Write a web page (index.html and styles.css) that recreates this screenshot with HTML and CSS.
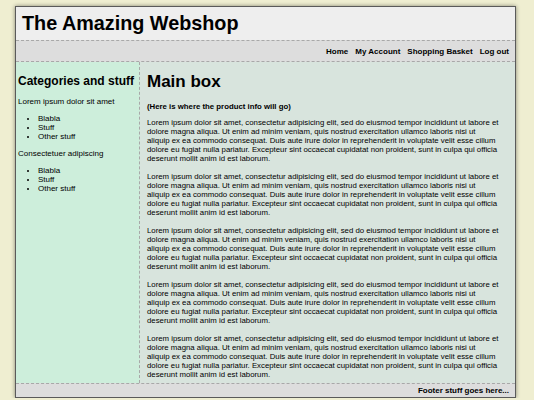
FILE: index.html
```html
<!DOCTYPE html>
<html>
<head>
<meta charset="utf-8">
<title>The Amazing Webshop</title>
<link rel="stylesheet" href="styles.css">
</head>
<body>
<div class="page">
  <header class="header">
    <h1 class="title">The Amazing Webshop</h1>
  </header>
  <nav class="nav">
    <a href="#">Home</a>
    <a href="#">My Account</a>
    <a href="#">Shopping Basket</a>
    <a href="#">Log out</a>
  </nav>
  <div class="content">
    <aside class="sidebar">
      <h2 class="side-title">Categories and stuff</h2>
      <p class="side-text">Lorem ipsum dolor sit amet</p>
      <ul class="side-list">
        <li>Blabla</li>
        <li>Stuff</li>
        <li>Other stuff</li>
      </ul>
      <p class="side-text">Consectetuer adipiscing</p>
      <ul class="side-list">
        <li>Blabla</li>
        <li>Stuff</li>
        <li>Other stuff</li>
      </ul>
    </aside>
    <main class="main">
      <h2 class="main-title">Main box</h2>
      <p class="lead">(Here is where the product info will go)</p>
      <p class="para">Lorem ipsum dolor sit amet, consectetur adipisicing elit, sed do eiusmod tempor incididunt ut labore et<br>dolore magna aliqua. Ut enim ad minim veniam, quis nostrud exercitation ullamco laboris nisi ut<br>aliquip ex ea commodo consequat. Duis aute irure dolor in reprehenderit in voluptate velit esse cillum<br>dolore eu fugiat nulla pariatur. Excepteur sint occaecat cupidatat non proident, sunt in culpa qui officia<br>deserunt mollit anim id est laborum.</p>
      <p class="para">Lorem ipsum dolor sit amet, consectetur adipisicing elit, sed do eiusmod tempor incididunt ut labore et<br>dolore magna aliqua. Ut enim ad minim veniam, quis nostrud exercitation ullamco laboris nisi ut<br>aliquip ex ea commodo consequat. Duis aute irure dolor in reprehenderit in voluptate velit esse cillum<br>dolore eu fugiat nulla pariatur. Excepteur sint occaecat cupidatat non proident, sunt in culpa qui officia<br>deserunt mollit anim id est laborum.</p>
      <p class="para">Lorem ipsum dolor sit amet, consectetur adipisicing elit, sed do eiusmod tempor incididunt ut labore et<br>dolore magna aliqua. Ut enim ad minim veniam, quis nostrud exercitation ullamco laboris nisi ut<br>aliquip ex ea commodo consequat. Duis aute irure dolor in reprehenderit in voluptate velit esse cillum<br>dolore eu fugiat nulla pariatur. Excepteur sint occaecat cupidatat non proident, sunt in culpa qui officia<br>deserunt mollit anim id est laborum.</p>
      <p class="para">Lorem ipsum dolor sit amet, consectetur adipisicing elit, sed do eiusmod tempor incididunt ut labore et<br>dolore magna aliqua. Ut enim ad minim veniam, quis nostrud exercitation ullamco laboris nisi ut<br>aliquip ex ea commodo consequat. Duis aute irure dolor in reprehenderit in voluptate velit esse cillum<br>dolore eu fugiat nulla pariatur. Excepteur sint occaecat cupidatat non proident, sunt in culpa qui officia<br>deserunt mollit anim id est laborum.</p>
      <p class="para">Lorem ipsum dolor sit amet, consectetur adipisicing elit, sed do eiusmod tempor incididunt ut labore et<br>dolore magna aliqua. Ut enim ad minim veniam, quis nostrud exercitation ullamco laboris nisi ut<br>aliquip ex ea commodo consequat. Duis aute irure dolor in reprehenderit in voluptate velit esse cillum<br>dolore eu fugiat nulla pariatur. Excepteur sint occaecat cupidatat non proident, sunt in culpa qui officia<br>deserunt mollit anim id est laborum.</p>
    </main>
  </div>
  <footer class="footer">Footer stuff goes here...</footer>
</div>
</body>
</html>
```

FILE: styles.css
```css
html, body {
  margin: 0;
  padding: 0;
}
body {
  background: #efeed1;
  font-family: "Liberation Sans", Arial, Helvetica, sans-serif;
  color: #000;
  padding: 6px 0 0 15px;
}
.page {
  width: 499px;
  border: 1px solid #5a5a5a;
  box-shadow: 0 0 4px rgba(0, 0, 0, 0.45);
  display: flex;
  flex-direction: column;
  background: #d8e4dd;
}
.header {
  background: #eeeeee;
  height: 33px;
  padding: 0 6px;
  box-sizing: border-box;
}
.title {
  margin: 0;
  font-size: 19.8px;
  font-weight: bold;
  line-height: 33px;
  color: #000;
}
.nav {
  background: #dddddd;
  border-top: 1px dashed #a8a8a8;
  border-bottom: 1px dashed #a8a8a8;
  height: 20px;
  display: flex;
  justify-content: flex-end;
  align-items: center;
  gap: 7px;
  padding: 0 6px;
}
.nav a {
  color: #000;
  text-decoration: none;
  font-weight: bold;
  font-size: 8px;
}
.content {
  display: flex;
  height: 321px;
}
.sidebar {
  width: 124px;
  flex-shrink: 0;
  background: #cdeedb;
  border-right: 1px dashed #a8a8a8;
  padding: 11px 2px 0 2px;
  box-sizing: border-box;
}
.side-title {
  margin: 0 0 8px;
  font-size: 12px;
  line-height: 16px;
  color: #000;
}
.side-text {
  margin: 0 0 8px;
  font-size: 8px;
  line-height: 9px;
}
.side-list {
  margin: 0 0 8px;
  padding-left: 20px;
  font-size: 8px;
  line-height: 9px;
}
.main {
  flex: 1;
  padding: 10px 4px 0 7px;
  box-sizing: border-box;
}
.main-title {
  margin: 0 0 10px;
  font-size: 17px;
  line-height: 20px;
  color: #000;
}
.lead {
  margin: 0 0 7px;
  font-size: 7.8px;
  font-weight: bold;
  line-height: 9px;
}
.para {
  margin: 0 0 9px;
  font-size: 7.8px;
  line-height: 9px;
  white-space: nowrap;
}
.footer {
  background: #dddddd;
  border-top: 1px dashed #a8a8a8;
  height: 13px;
  text-align: right;
  font-size: 8px;
  font-weight: bold;
  line-height: 13px;
  padding: 0 6px;
}
```
